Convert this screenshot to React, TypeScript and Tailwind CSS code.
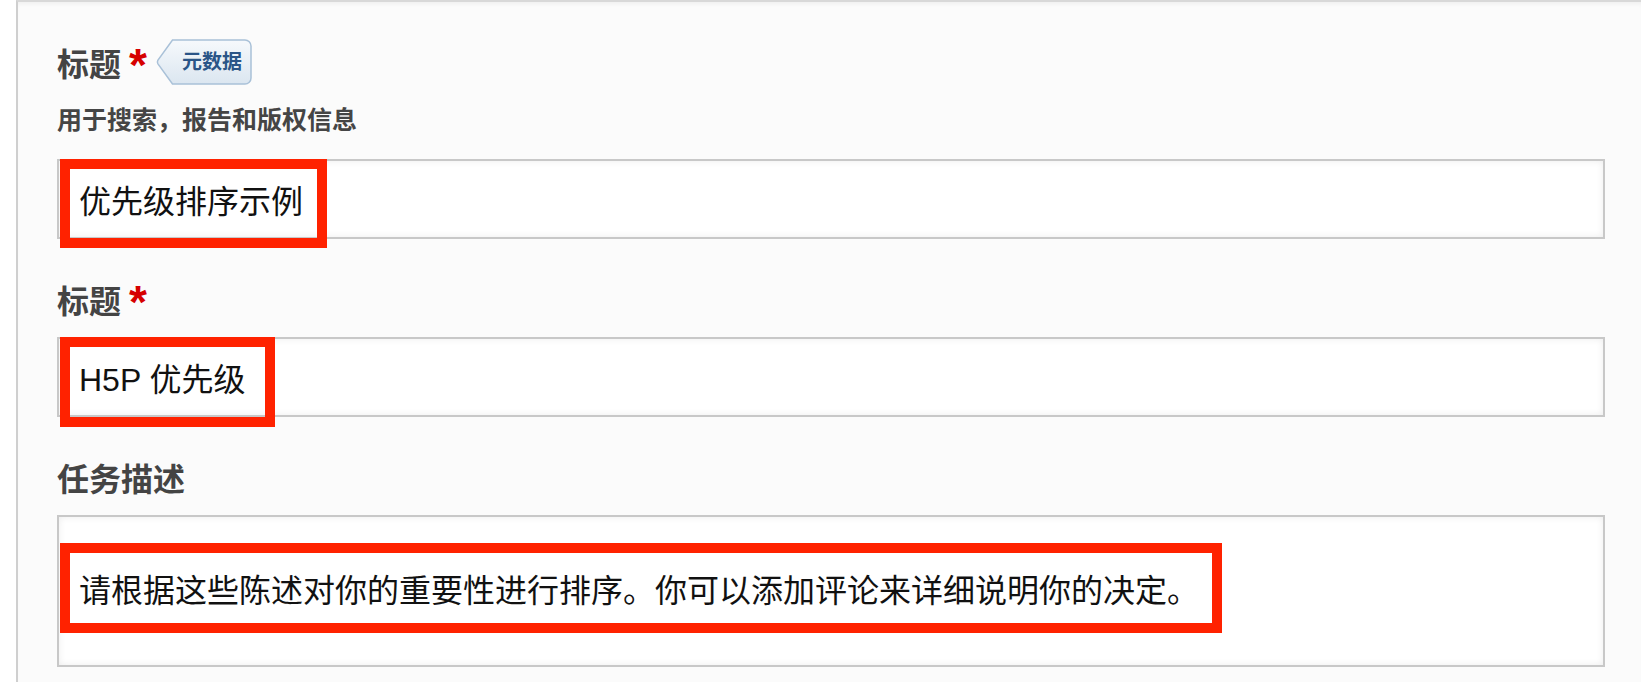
import React from "react";

function Label({ text, required }: { text: string; required?: boolean }) {
  return (
    <div className="flex items-start">
      <span className="text-[32px] leading-[36px] font-bold text-[#444444]">{text}</span>
      {required && (
        <span className="ml-[8px] text-[46px] leading-[36px] font-bold text-[#d60000]">*</span>
      )}
    </div>
  );
}

function Badge() {
  return (
    <div className="relative w-[96px] h-[46px] ml-[9px] flex items-center justify-center pl-[16px]">
      <svg className="absolute inset-0" width="96" height="46" viewBox="0 0 96 46">
        <defs>
          <linearGradient id="bg" x1="0" y1="0" x2="0" y2="1">
            <stop offset="0" stopColor="#f6f9fc" />
            <stop offset="1" stopColor="#dbe6f0" />
          </linearGradient>
        </defs>
        <path
          d="M16.5 1 H89 A6 6 0 0 1 95 7 V39 A6 6 0 0 1 89 45 H16.5 L1.8 24.6 Q1 23 1.8 21.4 Z"
          fill="url(#bg)"
          stroke="#a9c1d8"
          strokeWidth="1.5"
        />
      </svg>
      <span className="relative text-[20px] leading-[24px] font-bold text-[#2a5587]">元数据</span>
    </div>
  );
}

function RedBox({ cls }: { cls: string }) {
  return <div className={`absolute pointer-events-none border-[10px] border-[#ff2200] ${cls}`} />;
}

export default function App() {
  return (
    <div className="w-full h-[682px] bg-white overflow-hidden font-['Liberation_Sans','Noto_Sans_CJK_SC',sans-serif]">
      <div className="ml-[16px] w-[1625px] h-full border-l-2 border-t-2 border-l-[#cfcfcf] border-t-[#d8d8d8] bg-[#fbfbfb] pl-[39px] pr-[36px] pt-[37px] shadow-[inset_0_4px_4px_-2px_rgba(0,0,0,0.05)]">
        <div className="flex items-start h-[46px]">
          <div className="mt-[8px]">
            <Label text="标题" required />
          </div>
          <Badge />
        </div>
        <div className="mt-[20px] text-[25px] leading-[30px] font-semibold text-[#454545]">
          用于搜索，报告和版权信息
        </div>
        <div className="relative mt-[24px]">
          <input
            readOnly
            defaultValue="优先级排序示例"
            className="block w-full h-[80px] border-2 border-[#c8c8c8] bg-white pl-[20px] text-[32px] text-[#111111] outline-none shadow-[inset_0_0_7px_rgba(0,0,0,0.08)]"
          />
          <RedBox cls="left-[3px] top-0 w-[267px] h-[89px]" />
        </div>

        <div className="mt-[45px]">
          <Label text="标题" required />
        </div>
        <div className="relative mt-[17px]">
          <input
            readOnly
            defaultValue="H5P 优先级"
            className="block w-full h-[80px] border-2 border-[#c8c8c8] bg-white pl-[20px] text-[32px] text-[#111111] outline-none shadow-[inset_0_0_7px_rgba(0,0,0,0.08)]"
          />
          <RedBox cls="left-[3px] top-0 w-[215px] h-[90px]" />
        </div>

        <div className="mt-[45px]">
          <Label text="任务描述" />
        </div>
        <div className="relative mt-[17px]">
          <div className="flex items-center w-full h-[152px] border-2 border-[#c8c8c8] bg-white pl-[20px] text-[32px] leading-[38px] text-[#111111] shadow-[inset_0_0_7px_rgba(0,0,0,0.08)]">
            请根据这些陈述对你的重要性进行排序。你可以添加评论来详细说明你的决定。
          </div>
          <RedBox cls="left-[3px] top-[28px] w-[1162px] h-[90px]" />
        </div>
      </div>
    </div>
  );
}
